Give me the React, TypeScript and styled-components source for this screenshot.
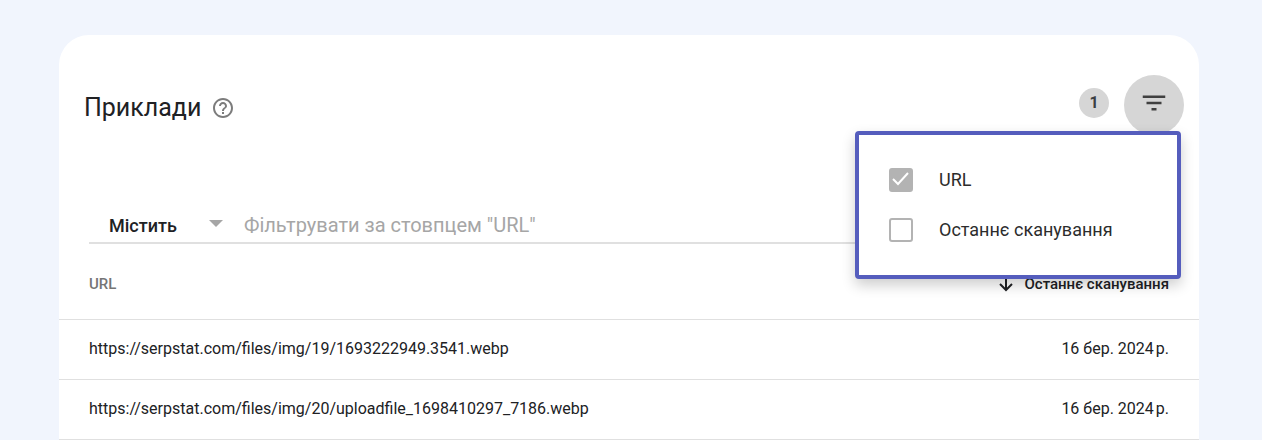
import React, { useState } from 'react';
import styled, { createGlobalStyle } from 'styled-components';

const GlobalStyle = createGlobalStyle`
  * { box-sizing: border-box; }
  body {
    margin: 0;
    background: #f1f5fd;
    color: #202124;
    font-family: Roboto, "Liberation Sans", sans-serif;
    font-size: 16px;
  }
  button, input, select { font: inherit; color: inherit; }
`;

const Page = styled.main`
  min-height: 100vh;
  display: flex;
  padding: 35px 63px 0 59px;
`;

const Card = styled.section`
  flex: 1;
  min-width: 0;
  background: #fff;
  border-radius: 30px 30px 0 0;
  padding-top: 40px;
`;

const Header = styled.header`
  display: flex;
  align-items: center;
  justify-content: space-between;
  height: 60px;
  padding: 0 15px 0 25px;
`;

const TitleGroup = styled.div`
  display: flex;
  align-items: center;
  gap: 10px;
  padding-top: 5px;
`;

const Title = styled.h1`
  margin: 0;
  font-size: 25px;
  line-height: 32px;
  font-weight: 400;
`;

const HelpButton = styled.button`
  display: flex;
  margin: 0;
  padding: 0;
  border: 0;
  background: none;
  color: #7c7c7c;
  cursor: pointer;
`;

const Actions = styled.div`
  position: relative;
  display: flex;
  align-items: center;
  gap: 15px;
`;

const Count = styled.span`
  width: 30px;
  height: 30px;
  margin-bottom: 4px;
  border-radius: 50%;
  background: #d6d6d6;
  font-weight: 700;
  line-height: 30px;
  text-align: center;
  color: #3c4043;
`;

const FilterButton = styled.button`
  display: flex;
  align-items: center;
  justify-content: center;
  width: 60px;
  height: 60px;
  padding: 0 0 4px;
  border: 0;
  border-radius: 50%;
  background: #d6d6d6;
  color: #404040;
  cursor: pointer;
`;

const Menu = styled.div`
  position: absolute;
  z-index: 1;
  top: 56px;
  right: 3px;
  width: 326px;
  padding: 20px 30px;
  border: 4px solid #555dbd;
  border-radius: 4px;
  background: #fff;
  box-shadow: 0 6px 14px rgba(0, 0, 0, 0.2);
`;

const Option = styled.label`
  display: flex;
  align-items: center;
  gap: 26px;
  height: 50px;
  font-size: 18px;
  line-height: 24px;
  color: #2c2c2c;
  white-space: nowrap;
  cursor: pointer;
`;

const CheckWrap = styled.span`
  display: grid;
  & > * { grid-area: 1 / 1; }
  svg { pointer-events: none; }
`;

const Checkbox = styled.input`
  appearance: none;
  width: 24px;
  height: 24px;
  margin: 0;
  border: 2px solid #b3b3b3;
  border-radius: 3px;
  background: #fff;
  &:checked { background: #b3b3b3; }
`;

const FilterRow = styled.div`
  display: flex;
  align-items: center;
  height: 39px;
  margin: 70px 30px 0;
  padding-top: 3px;
  border-bottom: 2px solid #e0e0e0;
`;

const SelectWrap = styled.div`
  display: grid;
  align-items: center;
  width: 155px;
  & > * { grid-area: 1 / 1; }
  svg { justify-self: end; margin-right: 21px; margin-bottom: 2px; pointer-events: none; }
`;

const Select = styled.select`
  appearance: none;
  width: 100%;
  height: 32px;
  padding: 0 40px 0 20px;
  border: 0;
  background: none;
  font-size: 18px;
  font-weight: 500;
`;

const FilterInput = styled.input`
  flex: 1;
  min-width: 0;
  height: 32px;
  padding: 0;
  border: 0;
  outline: 0;
  background: none;
  font-size: 20px;
  &::placeholder { color: #a6a6a6; opacity: 1; }
`;

const Table = styled.table`
  width: 100%;
  border-collapse: separate;
  border-spacing: 0;
`;

const HeadCell = styled.th<{ $end?: boolean }>`
  height: 76px;
  padding: 4px 30px 0;
  border-bottom: 1px solid #e0e0e0;
  font-size: 15px;
  font-weight: 500;
  text-align: ${(p) => (p.$end ? 'right' : 'left')};
  color: ${(p) => (p.$end ? '#202124' : '#757575')};
`;

const SortButton = styled.button`
  display: inline-flex;
  align-items: center;
  gap: 10px;
  padding: 0;
  border: 0;
  background: none;
  vertical-align: middle;
  cursor: pointer;
`;

const Cell = styled.td<{ $end?: boolean }>`
  height: 60px;
  padding: 0 30px 2px;
  border-bottom: 1px solid #e0e0e0;
  text-align: ${(p) => (p.$end ? 'right' : 'left')};
  white-space: nowrap;
`;

const rows = [
  { url: 'https://serpstat.com/files/img/19/1693222949.3541.webp', date: '16 бер. 2024\u202fр.' },
  { url: 'https://serpstat.com/files/img/20/uploadfile_1698410297_7186.webp', date: '16 бер. 2024\u202fр.' },
];

const columns = ['URL', 'Останнє сканування'];

export default function App() {
  const [open, setOpen] = useState(true);
  const [selected, setSelected] = useState<string[]>(['URL']);

  const toggle = (name: string) =>
    setSelected((s) => (s.includes(name) ? s.filter((n) => n !== name) : [...s, name]));

  return (
    <Page>
      <GlobalStyle />
      <Card>
        <Header>
          <TitleGroup>
            <Title>Приклади</Title>
            <HelpButton aria-label="Довідка">
              <svg width="24" height="24" viewBox="0 0 24 24" fill="currentColor">
                <path d="M11 18h2v-2h-2v2zm1-16C6.48 2 2 6.48 2 12s4.48 10 10 10 10-4.48 10-10S17.52 2 12 2zm0 18c-4.41 0-8-3.59-8-8s3.59-8 8-8 8 3.59 8 8-3.59 8-8 8zm0-14c-2.21 0-4 1.79-4 4h2c0-1.1.9-2 2-2s2 .9 2 2c0 2-3 1.75-3 5h2c0-2.25 3-2.5 3-5 0-2.21-1.79-4-4-4z" />
              </svg>
            </HelpButton>
          </TitleGroup>
          <Actions>
            <Count>1</Count>
            <FilterButton aria-label="Фільтр" aria-expanded={open} onClick={() => setOpen(!open)}>
              <svg width="30" height="30" viewBox="0 0 24 24" fill="currentColor">
                <path d="M10 18h4v-2h-4v2zM3 6v2h18V6H3zm3 7h12v-2H6v2z" />
              </svg>
            </FilterButton>
            {open && (
              <Menu>
                {columns.map((name) => (
                  <Option key={name}>
                    <CheckWrap>
                      <Checkbox type="checkbox" checked={selected.includes(name)} onChange={() => toggle(name)} />
                      {selected.includes(name) && (
                        <svg width="24" height="24" viewBox="0 0 24 24" fill="none" stroke="#fff" strokeWidth="2">
                          <path d="M4 11l5 5L19 5" />
                        </svg>
                      )}
                    </CheckWrap>
                    <span>{name}</span>
                  </Option>
                ))}
              </Menu>
            )}
          </Actions>
        </Header>
        <FilterRow>
          <SelectWrap>
            <Select aria-label="Умова">
              <option>Містить</option>
              <option>Не містить</option>
            </Select>
            <svg width="14" height="8" viewBox="0 0 14 8" fill="#a6a6a6">
              <path d="M0 0h14L7 7z" />
            </svg>
          </SelectWrap>
          <FilterInput aria-label="Фільтр за URL" placeholder={'Фільтрувати за стовпцем "URL"'} />
        </FilterRow>
        <Table>
          <thead>
            <tr>
              <HeadCell scope="col">URL</HeadCell>
              <HeadCell scope="col" $end>
                <SortButton>
                  <svg width="16" height="16" viewBox="0 0 16 16" fill="none" stroke="currentColor" strokeWidth="2">
                    <path d="M8 1v13M2 8l6 6 6-6" />
                  </svg>
                  Останнє сканування
                </SortButton>
              </HeadCell>
            </tr>
          </thead>
          <tbody>
            {rows.map((row) => (
              <tr key={row.url}>
                <Cell>{row.url}</Cell>
                <Cell $end>{row.date}</Cell>
              </tr>
            ))}
          </tbody>
        </Table>
      </Card>
    </Page>
  );
}
